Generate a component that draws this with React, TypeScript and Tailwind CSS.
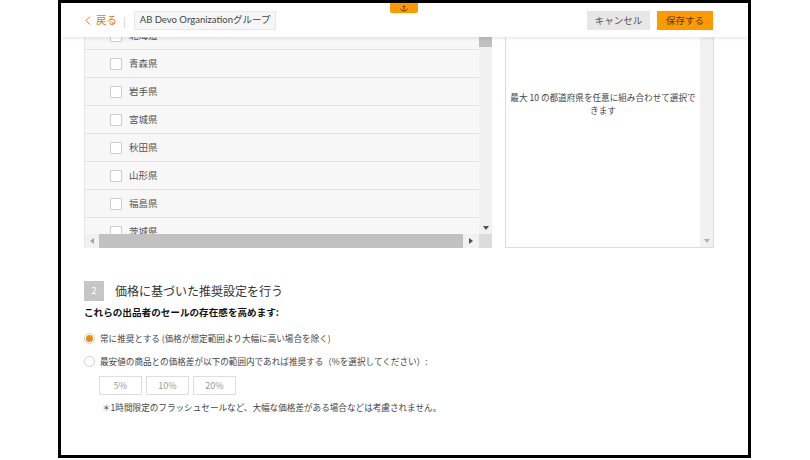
import React from "react";

const prefectures = ["北海道", "青森県", "岩手県", "宮城県", "秋田県", "山形県", "福島県", "茨城県"];

const font = "font-['Noto_Sans_CJK_JP','Noto_Sans',sans-serif]";

const Row: React.FC<{ name: string }> = ({ name }) => (
  <div className="flex h-[28px] shrink-0 items-center border-b border-[#e2e2e2] bg-[#f7f7f7] pl-[25px]">
    <span className="h-[12px] w-[12px] border border-[#cfcfcf] bg-white" />
    <span className="ml-[7px] text-[9.5px] text-[#555]">{name}</span>
  </div>
);

const App: React.FC = () => {
  return (
    <div className={`h-[460px] w-[810px] bg-white ${font}`}>
      <div className="ml-[58px] flex h-[458px] w-[693px] flex-col overflow-hidden border-[3px] border-black bg-white">
        {/* Header */}
        <div className="relative z-10 flex h-[34px] shrink-0 items-center bg-white pl-[24px] pr-[35px] shadow-[0_2px_3px_rgba(0,0,0,0.08)]">
          <span className="flex items-center text-[10.5px] text-[#e47911]">
            <svg width="6" height="9" viewBox="0 0 6 9" className="mr-[5px]">
              <path d="M5 0.5 L1 4.5 L5 8.5" stroke="#e47911" strokeWidth="1" fill="none" />
            </svg>
            戻る
          </span>
          <span className="ml-[6px] text-[10px] text-[#ccc]">|</span>
          <span className="ml-[8px] flex h-[19px] items-center border border-[#e8e8e8] bg-[#f6f6f6] px-[5px] font-['Lato','Noto_Sans_CJK_JP',sans-serif] text-[9.5px] text-[#444]">
            AB Devo Organizationグループ
          </span>
          <div className="absolute left-[329px] top-0 flex h-[10px] w-[28px] items-center justify-center rounded-b-[2px] bg-[#ff9900]">
            <svg width="10" height="7" viewBox="0 0 10 7">
              <path d="M5 0.5 V5.5 M3.5 1.5 H6.5 M1.5 3.5 Q2 6 5 6 Q8 6 8.5 3.5" stroke="#6b4200" strokeWidth="0.9" fill="none" />
            </svg>
          </div>
          <div className="ml-auto flex gap-[7px]">
            <button className="flex h-[19px] w-[63px] items-center justify-center bg-[#e7e7e7] text-[9.5px] text-[#555]">
              キャンセル
            </button>
            <button className="flex h-[19px] w-[56px] items-center justify-center bg-[#ff9900] text-[9.5px] text-[#5a3800]">
              保存する
            </button>
          </div>
        </div>

        {/* Panels */}
        <div className="flex gap-[13px] pl-[23px]">
          <div className="flex h-[211px] w-[408px] flex-col border-l border-[#e6e6e6]">
            <div className="flex h-[197px]">
              <div className="flex-1 overflow-hidden">
                <div className="-mt-[15px] flex flex-col">
                  {prefectures.map((p) => (
                    <Row key={p} name={p} />
                  ))}
                </div>
              </div>
              <div className="flex w-[13px] flex-col bg-[#f1f1f1]">
                <div className="h-[10px] bg-[#c1c1c1]" />
                <div className="flex-1" />
                <div className="flex h-[12px] items-center justify-center">
                  <svg width="6" height="4" viewBox="0 0 6 4">
                    <path d="M0 0 H6 L3 4 Z" fill="#505050" />
                  </svg>
                </div>
              </div>
            </div>
            <div className="flex h-[14px]">
              <div className="flex flex-1 items-center bg-[#f1f1f1]">
                <div className="flex w-[14px] justify-center">
                  <svg width="4" height="6" viewBox="0 0 4 6">
                    <path d="M4 0 V6 L0 3 Z" fill="#a3a3a3" />
                  </svg>
                </div>
                <div className="h-[14px] flex-1 bg-[#c1c1c1]" />
                <div className="flex w-[16px] justify-center">
                  <svg width="4" height="6" viewBox="0 0 4 6">
                    <path d="M0 0 V6 L4 3 Z" fill="#505050" />
                  </svg>
                </div>
              </div>
              <div className="w-[13px] bg-[#dcdcdc]" />
            </div>
          </div>

          <div className="flex h-[211px] w-[209px] border border-t-0 border-[#dcdcdc]">
            <div className="flex flex-1 flex-col items-center pt-[54px] text-[8.6px] leading-[13px] text-[#444]">
              <span className="whitespace-nowrap">最大 10 の都道府県を任意に組み合わせて選択で</span>
              <span>きます</span>
            </div>
            <div className="flex w-[13px] flex-col justify-end bg-[#f1f1f1] pb-[4px]">
              <div className="flex justify-center">
                <svg width="6" height="4" viewBox="0 0 6 4">
                  <path d="M0 0 H6 L3 4 Z" fill="#b0b0b0" />
                </svg>
              </div>
            </div>
          </div>
        </div>

        {/* Section 2 */}
        <div className="flex flex-col pl-[23px] pt-[33px]">
          <div className="flex items-center">
            <span className="flex h-[20px] w-[20px] items-center justify-center bg-[#c6c6c6] text-[9px] text-white">
              2
            </span>
            <span className="ml-[11px] text-[12px] text-[#333]">価格に基づいた推奨設定を行う</span>
          </div>
          <div className="mt-[4px] text-[9.6px] font-bold text-[#111]">これらの出品者のセールの存在感を高めます:</div>

          <label className="mt-[13px] flex items-center">
            <span className="flex h-[11px] w-[11px] items-center justify-center rounded-full border border-[#cfcfcf] bg-white">
              <span className="h-[7px] w-[7px] rounded-full bg-[#f08c00]" />
            </span>
            <span className="ml-[5px] text-[8.6px] text-[#444]">
              常に推奨とする (価格が想定範囲より大幅に高い場合を除く)
            </span>
          </label>

          <label className="mt-[10px] flex items-center">
            <span className="h-[11px] w-[11px] rounded-full border border-[#cfcfcf] bg-white" />
            <span className="ml-[5px] text-[8.6px] text-[#444]">
              最安値の商品との価格差が以下の範囲内であれば推奨する（%を選択してください）:
            </span>
          </label>

          <div className="ml-[15px] mt-[8px] flex gap-[4px]">
            {["5%", "10%", "20%"].map((v) => (
              <span
                key={v}
                className="flex h-[19px] w-[43px] items-center justify-center border border-[#dedede] bg-white text-[9px] text-[#999]"
              >
                {v}
              </span>
            ))}
          </div>

          <div className="ml-[18px] mt-[6px] text-[8.6px] text-[#444]">
            ＊1時間限定のフラッシュセールなど、大幅な価格差がある場合などは考慮されません。
          </div>
        </div>
      </div>
    </div>
  );
};

export default App;
